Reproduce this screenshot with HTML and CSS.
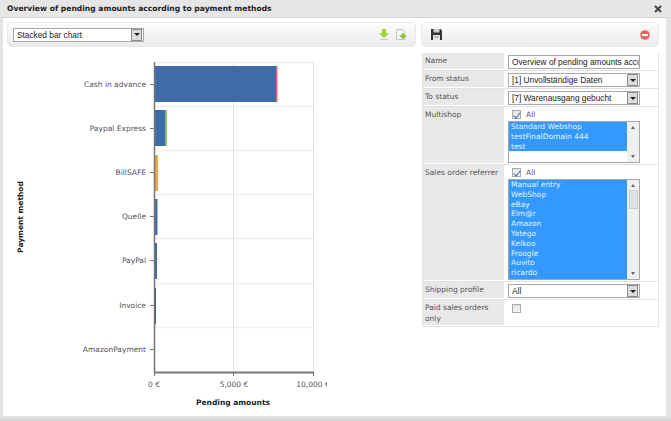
FILE: index.html
```html
<!DOCTYPE html>
<html lang="en">
	<head>
		<meta charset="UTF-8">
		<title>Overview of pending amounts</title>
		<link rel="stylesheet" href="styles.css">
	</head>
	<body>
		<div class="dialog">
			<div class="dialog_title">
				<span>Overview of pending amounts according to payment methods</span>
				<svg class="close_icon" width="8" height="8" viewBox="0 0 8 8"><path d="M1 1l6 6M7 1l-6 6" stroke="#444" stroke-width="2"/></svg>
			</div>
			<div class="dialog_body">
				<div class="left_col">
					<div class="toolbar toolbar_left">
						<div class="select chart_type">
							<span class="select_text">Stacked bar chart</span>
							<span class="select_btn"><i></i></span>
						</div>
						<div class="tool_icons">
							<svg width="10" height="11" viewBox="0 0 10 11"><path d="M3 0h4v4h3l-5 5-5-5h3z" fill="#a4d32c"/><path d="M1 10.500h8" stroke="#ccc"/></svg>
							<svg width="11" height="11" viewBox="0 0 11 11"><path d="M.5.500h6l2.500 2.500v7.500H.5z" fill="#f6f6f6" stroke="#c4c4c4"/><path d="M6 4h2v2h3l-4 4.500-4-4.500h3z" fill="#8cc63f"/></svg>
						</div>
					</div>
					<div class="chart">
						<svg width="327" height="369" viewBox="0 0 327 369">
							<g stroke="#f0f0f0" stroke-width="1.500" fill="none">
								<path d="M154 59.500H314M154 103.500H314M154 147.500H314M154 191.500H314M154 236.500H314M154 280.500H314"/>
								<path d="M154 15.500H313.500"/>
							</g>
							<path d="M233.500 15V325M313.500 15V325" stroke="#e4e4e4" fill="none"/>
							<rect x="155" y="19" width="121" height="36" fill="#3e6ca8"/>
							<rect x="276" y="19" width="1.500" height="36" fill="#d96b76"/>
							<rect x="155" y="63" width="10" height="36" fill="#3e6ca8"/>
							<rect x="165" y="63" width="2" height="36" fill="#8cb878"/>
							<rect x="155" y="108" width="3" height="36" fill="#e8a848"/>
							<rect x="155" y="152" width="2.500" height="36" fill="#3e6ca8"/>
							<rect x="155" y="196" width="2" height="36" fill="#3e6ca8"/>
							<rect x="155" y="241" width="1" height="36" fill="#2e558c"/>
							<g fill="none" stroke="#777">
								<path d="M154.500 15V326" stroke-width="1.500"/>
								<path d="M154 325.500H314" stroke-width="2"/>
								<path d="M150 37.500h4M150 81.500h4M150 125.500h4M150 169.500h4M150 213.500h4M150 258.500h4M150 302.500h4"/>
								<path d="M154.500 325v4M233.500 325v4M313.500 325v4"/>
							</g>
							<g class="cat_labels" text-anchor="end">
								<text x="146" y="40">Cash in advance</text>
								<text x="146" y="84">Paypal Express</text>
								<text x="146" y="128">BillSAFE</text>
								<text x="146" y="172">Quelle</text>
								<text x="146" y="216">PayPal</text>
								<text x="146" y="261">Invoice</text>
								<text x="146" y="305">AmazonPayment</text>
							</g>
							<g class="val_labels" text-anchor="middle">
								<text x="154" y="340">0 €</text>
								<text x="234" y="340">5,000 €</text>
								<text x="313" y="340">10,000 €</text>
							</g>
							<text class="axis_title" x="233" y="358" text-anchor="middle">Pending amounts</text>
							<text class="axis_title" transform="translate(23 170) rotate(-90)" text-anchor="middle">Payment method</text>
						</svg>
					</div>
				</div>
				<div class="right_col">
					<div class="toolbar toolbar_right">
						<svg width="11" height="11" viewBox="0 0 11 11"><path d="M0 0h9.500l1.500 1.500V11H0z" fill="#333"/><path d="M2.500 0h6v3.500h-6z" fill="#ccc"/><path d="M2 6h7v5H2z" fill="#e4e4e4"/><path d="M3 8h5" stroke="#999"/></svg>
						<svg width="10" height="10" viewBox="0 0 10 10"><circle cx="5" cy="5" r="4.800" fill="#e8655f"/><path d="M2 4h6v2H2z" fill="#fff"/></svg>
					</div>
					<div class="form_table">
						<div class="form_row">
							<div class="form_label">Name</div>
							<div class="form_value"><div class="text_input">Overview of pending amounts according</div></div>
						</div>
						<div class="form_row">
							<div class="form_label">From status</div>
							<div class="form_value"><div class="select"><span class="select_text">[1] Unvollständige Daten</span><span class="select_btn"><i></i></span></div></div>
						</div>
						<div class="form_row">
							<div class="form_label">To status</div>
							<div class="form_value"><div class="select"><span class="select_text">[7] Warenausgang gebucht</span><span class="select_btn"><i></i></span></div></div>
						</div>
						<div class="form_row">
							<div class="form_label">Multishop</div>
							<div class="form_value">
								<div class="check_line"><span class="check checked"></span><span>All</span></div>
								<div class="list_box short">
									<div class="list_items">
										<div class="list_sel">Standard Webshop</div>
										<div class="list_sel">testFinalDomain 444</div>
										<div class="list_sel">test</div>
									</div>
									<div class="scrollbar"><span class="arrow up"></span><span class="arrow down"></span></div>
								</div>
							</div>
						</div>
						<div class="form_row">
							<div class="form_label">Sales order referrer</div>
							<div class="form_value">
								<div class="check_line"><span class="check checked"></span><span>All</span></div>
								<div class="list_box tall">
									<div class="list_items">
										<div class="list_sel">Manual entry</div>
										<div class="list_sel">WebShop</div>
										<div class="list_sel">eBay</div>
										<div class="list_sel">Elm@r</div>
										<div class="list_sel">Amazon</div>
										<div class="list_sel">Yatego</div>
										<div class="list_sel">Kelkoo</div>
										<div class="list_sel">Froogle</div>
										<div class="list_sel">Auvito</div>
										<div class="list_sel">ricardo</div>
									</div>
									<div class="scrollbar"><span class="arrow up"></span><span class="thumb"></span><span class="arrow down"></span></div>
								</div>
							</div>
						</div>
						<div class="form_row">
							<div class="form_label">Shipping profile</div>
							<div class="form_value"><div class="select"><span class="select_text">All</span><span class="select_btn"><i></i></span></div></div>
						</div>
						<div class="form_row">
							<div class="form_label">Paid sales orders only</div>
							<div class="form_value"><span class="check single"></span></div>
						</div>
					</div>
				</div>
			</div>
		</div>
		<div class="window_bottom"></div>
	</body>
</html>
```

FILE: styles.css
```css
* {
	margin: 0;
	padding: 0;
	box-sizing: border-box;
}

html, body {
	width: 671px;
	height: 421px;
	overflow: hidden;
}

body {
	background-color: #e8e8e8;
	font-family: "DejaVu Sans", Verdana, sans-serif;
	font-size: 7.500px;
	color: #555;
}

.dialog {
	height: 416px;
	display: flex;
	flex-direction: column;
}

.dialog_title {
	height: 17px;
	flex: none;
	display: flex;
	align-items: center;
	justify-content: space-between;
	padding: 0 9px 0 7px;
	background-color: #e6e6e6;
	font-size: 7.600px;
	font-weight: bold;
	color: #222;
}

.dialog_body {
	flex: 1;
	display: flex;
	gap: 5px;
	padding: 4px 7px 0 4px;
	background-color: #fff;
	border-style: solid;
	border-width: 1px 5px 0 3px;
	border-color: #d2d2d2 #e4e4e4 #e4e4e4 #e4e4e4;
}

.left_col {
	width: 409px;
	flex: none;
}

.right_col {
	width: 238px;
	flex: none;
}

.toolbar {
	height: 25px;
	display: flex;
	align-items: center;
	justify-content: space-between;
	border: 1px solid #e8e8e8;
	border-radius: 5px;
	background: linear-gradient(#fcfcfc, #ebebeb);
}

.toolbar_left {
	padding: 0 8px 0 5px;
}

.toolbar_right {
	padding: 0 8px 0 9px;
}

.tool_icons {
	display: flex;
	gap: 7px;
}

.select {
	display: flex;
	width: 132px;
	height: 14px;
	padding-right: 1px;
	border: 1px solid #a8a8a8;
	background-color: #fff;
	font-family: "Liberation Sans", Arial, sans-serif;
	font-size: 8.300px;
	color: #222;
	justify-content: space-between;
	align-items: stretch;
}

.chart_type {
	width: 131px;
}

.select_text {
	padding-left: 3px;
	line-height: 12px;
	white-space: nowrap;
}

.select_btn {
	width: 11px;
	background-color: #dcdcdc;
	border: 1px solid #8c8c8c;
	display: flex;
	align-items: center;
	justify-content: center;
}

.select_btn i {
	width: 0;
	height: 0;
	border: 3px solid transparent;
	border-top: 3px solid #222;
	border-bottom: none;
}

.chart {
	height: 369px;
	margin-left: -7px;
}

.cat_labels text, .val_labels text {
	font-family: "DejaVu Sans", Verdana, sans-serif;
	font-size: 7.500px;
	fill: #555;
}

.axis_title {
	font-family: "DejaVu Sans", Verdana, sans-serif;
	font-size: 7.500px;
	font-weight: bold;
	fill: #222;
}

.form_table {
	margin-top: 6px;
	margin-left: 1px;
	width: 237px;
	border: 1px solid #e2e2e2;
	border-top: none;
}

.form_row {
	display: flex;
	border-bottom: 1px solid #e2e2e2;
}

.form_row:last-child {
	height: 26px;
	border-bottom: none;
}

.form_label {
	width: 81px;
	flex: none;
	padding: 2px 2px 0 2px;
	margin: 0 1px 1px 0;
	background-color: #e8e8e8;
	line-height: 11px;
}

.form_value {
	flex: 1;
	min-width: 0;
	padding: 2px 0 1px 3px;
}

.text_input {
	width: 132px;
	height: 14px;
	padding-left: 3px;
	border: 1px solid #a8a8a8;
	font-family: "Liberation Sans", Arial, sans-serif;
	font-size: 8.300px;
	line-height: 12px;
	color: #222;
	white-space: nowrap;
	overflow: hidden;
}

.check_line {
	display: flex;
	align-items: center;
	gap: 5px;
	height: 11px;
	margin: 0 0 1px 4px;
}

.check {
	display: block;
	width: 9px;
	height: 9px;
	border: 1px solid #aaa;
	background: linear-gradient(#e4e4e4, #f6f6f6);
	position: relative;
}

.single {
	margin: 2px 0 0 4px;
}

.checked::after {
	content: "";
	position: absolute;
	left: 2px;
	top: 0;
	width: 3px;
	height: 6px;
	border: solid #4060a8;
	border-width: 0 1px 1px 0;
	transform: rotate(40deg);
}

.list_box {
	width: 132px;
	display: flex;
	border: 1px solid #a8a8a8;
	background-color: #fff;
	overflow: hidden;
}

.short {
	height: 42px;
}

.tall {
	height: 101px;
}

.list_items {
	flex: 1;
	min-width: 0;
}

.tall .list_items {
	background-color: #3399ff;
}

.list_sel {
	height: 9.800px;
	line-height: 10px;
	padding-left: 2px;
	background-color: #3399ff;
	color: #e4f1ff;
	white-space: nowrap;
}

.scrollbar {
	width: 12px;
	flex: none;
	background-color: #f0f0f0;
	display: flex;
	flex-direction: column;
	justify-content: space-between;
	align-items: center;
	position: relative;
	padding: 4px 0;
}

.arrow {
	width: 0;
	height: 0;
	border: 2px solid transparent;
}

.arrow.up {
	border-bottom: 3px solid #666;
	border-top: none;
}

.arrow.down {
	border-top: 3px solid #666;
	border-bottom: none;
}

.thumb {
	position: absolute;
	top: 10px;
	left: 2px;
	width: 9px;
	height: 19px;
	background-color: #e2e2e2;
	border: 1px solid #ccc;
}

.window_bottom {
	height: 5px;
	background: linear-gradient(#e8e8e8, #cfcfcf);
}
```
